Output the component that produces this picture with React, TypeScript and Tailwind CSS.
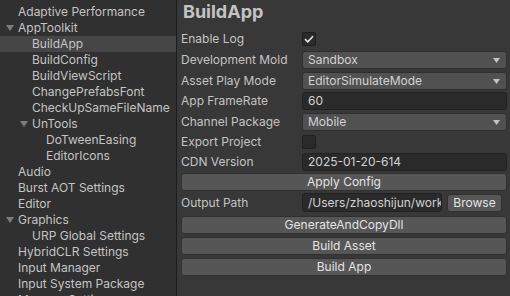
import React from 'react';

type TreeItem = { label: string; depth: 0 | 1 | 2; open?: boolean; selected?: boolean };

const tree: TreeItem[] = [
  { label: 'Adaptive Performance', depth: 0 },
  { label: 'AppToolkit', depth: 0, open: true },
  { label: 'BuildApp', depth: 1, selected: true },
  { label: 'BuildConfig', depth: 1 },
  { label: 'BuildViewScript', depth: 1 },
  { label: 'ChangePrefabsFont', depth: 1 },
  { label: 'CheckUpSameFileName', depth: 1 },
  { label: 'UnTools', depth: 1, open: true },
  { label: 'DoTweenEasing', depth: 2 },
  { label: 'EditorIcons', depth: 2 },
  { label: 'Audio', depth: 0 },
  { label: 'Burst AOT Settings', depth: 0 },
  { label: 'Editor', depth: 0 },
  { label: 'Graphics', depth: 0, open: true },
  { label: 'URP Global Settings', depth: 1 },
  { label: 'HybridCLR Settings', depth: 0 },
  { label: 'Input Manager', depth: 0 },
  { label: 'Input System Package', depth: 0 },
  { label: 'Memory Settings', depth: 0 },
];

const indent = ['pl-[6px]', 'pl-[20px]', 'pl-[34px]'];

function Caret() {
  return (
    <svg width="8" height="6" viewBox="0 0 8 6" className="text-[#7d7d7d]">
      <path d="M0 0 L8 0 L4 6 Z" fill="currentColor" />
    </svg>
  );
}

function Sidebar() {
  return (
    <div className="w-[177px] shrink-0 h-full bg-[#303030] border-r border-[#1c1c1c] pt-[4px] overflow-hidden">
      {tree.map(item => (
        <div
          key={item.label}
          className={`h-4 flex items-center ${indent[item.depth]} ${item.selected ? 'bg-[#464646]' : ''}`}
        >
          <span className="w-[12px] flex items-center">{item.open && <Caret />}</span>
          <span className="text-[12px] leading-4 text-[#c4c4c4] whitespace-nowrap">{item.label}</span>
        </div>
      ))}
    </div>
  );
}

function Label({ children }: { children: React.ReactNode }) {
  return <span className="w-[121px] shrink-0 text-[12px] text-[#c4c4c4] whitespace-nowrap">{children}</span>;
}

function Checkbox({ checked }: { checked?: boolean }) {
  return (
    <div className="w-[14px] h-[14px] rounded-[2px] bg-[#2a2a2a] border border-[#1f1f1f] flex items-center justify-center">
      {checked && (
        <svg width="10" height="8" viewBox="0 0 10 8">
          <path d="M1 4.2 L3.8 6.8 L9 1.2" fill="none" stroke="#e6e6e6" strokeWidth="1.6" />
        </svg>
      )}
    </div>
  );
}

function Dropdown({ value }: { value: string }) {
  return (
    <div className="flex-1 h-[18px] rounded-[3px] bg-[#515151] border border-[#2f2f2f] flex items-center justify-between pl-[5px] pr-[6px]">
      <span className="text-[12px] text-[#d2d2d2] whitespace-nowrap">{value}</span>
      <svg width="7" height="5" viewBox="0 0 7 5">
        <path d="M0 0 L7 0 L3.5 5 Z" fill="#c4c4c4" />
      </svg>
    </div>
  );
}

function TextField({ value, className = '' }: { value: string; className?: string }) {
  return (
    <div className={`h-[18px] rounded-[3px] bg-[#2a2a2a] border border-[#212121] flex items-center pl-[5px] overflow-hidden ${className}`}>
      <span className="text-[12px] text-[#d2d2d2] whitespace-nowrap">{value}</span>
    </div>
  );
}

function Button({ children, className = '' }: { children: React.ReactNode; className?: string }) {
  return (
    <div className={`h-[18px] rounded-[3px] bg-[#565656] border border-[#303030] flex items-center justify-center text-[12px] text-[#e4e4e4] whitespace-nowrap ${className}`}>
      {children}
    </div>
  );
}

export default function App() {
  return (
    <div
      className="w-[510px] h-[296px] flex bg-[#383838] overflow-hidden"
      style={{ fontFamily: 'Inter, "Noto Sans", sans-serif' }}
    >
      <Sidebar />
      <div className="flex-1 flex flex-col pl-[4px] pr-[3px]">
        <div className="h-[30px] pt-[1px] pl-[2px] text-[18px] leading-[22px] font-bold text-[#c4c4c4]">BuildApp</div>

        <div className="h-[18px] flex items-center">
          <Label>Enable Log</Label>
          <Checkbox checked />
        </div>
        <div className="h-[18px] mt-[3px] flex items-center">
          <Label>Development Mold</Label>
          <Dropdown value="Sandbox" />
        </div>
        <div className="h-[18px] mt-[3px] flex items-center">
          <Label>Asset Play Mode</Label>
          <Dropdown value="EditorSimulateMode" />
        </div>
        <div className="h-[18px] mt-[2px] flex items-center">
          <Label>App FrameRate</Label>
          <TextField value="60" className="flex-1" />
        </div>
        <div className="h-[18px] mt-[3px] flex items-center">
          <Label>Channel Package</Label>
          <Dropdown value="Mobile" />
        </div>
        <div className="h-[18px] mt-[2px] flex items-center">
          <Label>Export Project</Label>
          <Checkbox />
        </div>
        <div className="h-[18px] mt-[2px] flex items-center">
          <Label>CDN Version</Label>
          <TextField value="2025-01-20-614" className="flex-1" />
        </div>
        <Button className="mt-[2px]">Apply Config</Button>
        <div className="h-[19px] mt-[2px] flex items-center">
          <Label>Output Path</Label>
          <TextField value="/Users/zhaoshijun/work" className="w-[140px] h-[19px]" />
          <Button className="ml-[5px] w-[55px]">Browse</Button>
        </div>
        <Button className="mt-[4px]">GenerateAndCopyDll</Button>
        <Button className="mt-[3px]">Build Asset</Button>
        <Button className="mt-[3px]">Build App</Button>
      </div>
    </div>
  );
}
